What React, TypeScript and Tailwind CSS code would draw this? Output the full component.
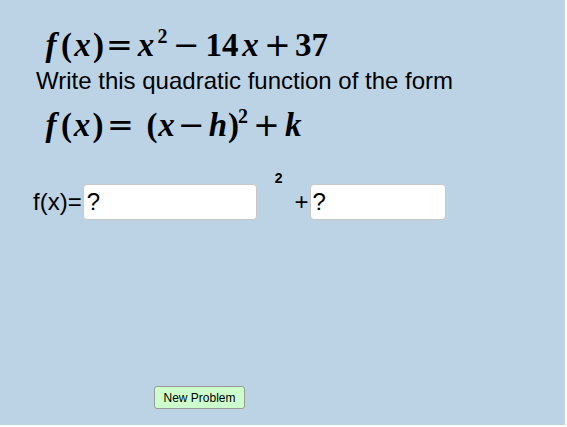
import React from 'react';

const serif = { fontFamily: '"Liberation Serif", "DejaVu Serif", serif' };
const sans = { fontFamily: '"Liberation Sans", Arial, sans-serif' };
const opFont = { fontFamily: '"DejaVu Sans", sans-serif' };

function MathLine({ children }: { children: React.ReactNode }) {
  return (
    <div className="flex items-baseline h-[34px] leading-[34px] text-[33px] font-bold text-black" style={serif}>
      {children}
    </div>
  );
}

// one glyph of the formula, centred in a box of its own width
function T({ w, it, children }: { w: string; it?: boolean; children: React.ReactNode }) {
  return <span className={`${w} text-center ${it ? 'italic' : ''}`}>{children}</span>;
}

function Op({ w, c }: { w: string; c: string }) {
  return (
    <span className={`${w} text-center text-[32px] font-normal`} style={opFont}>
      {c}
    </span>
  );
}

const Sq = ({ w }: { w: string }) => (
  <span className={`${w} text-center text-[20px] relative -top-[13px]`}>2</span>
);

export default function App() {
  return (
    <div className="w-[567px] h-[427px] bg-white">
      <div className="w-[565px] h-[425px] bg-[#bcd3e6] flex flex-col pt-[28px]">
        <div className="pl-[41px]">
          <MathLine>
            <T w="w-[20px]" it>f</T>
            <T w="w-[11px]">(</T>
            <T w="w-[21px]" it>x</T>
            <T w="w-[11px]">)</T>
            <Op w="w-[31px]" c="=" />
            <T w="w-[22px]" it>x</T>
            <Sq w="w-[11px]" />
            <Op w="w-[37px]" c="−" />
            <T w="w-[34px]">14</T>
            <T w="w-[23px]" it>x</T>
            <Op w="w-[31px]" c="+" />
            <T w="w-[37px]">37</T>
          </MathLine>
        </div>
        <div className="pl-[36px] mt-[4px] text-[24px] leading-[30px] text-black" style={sans}>
          Write this quadratic function of the form
        </div>
        <div className="pl-[41px] mt-[12px]">
          <MathLine>
            <T w="w-[20px]" it>f</T>
            <T w="w-[11px]">(</T>
            <T w="w-[20px]" it>x</T>
            <T w="w-[12px]">)</T>
            <Op w="w-[33px]" c="=" />
            <T w="w-[12px] ml-[9px]">(</T>
            <T w="w-[17px]" it>x</T>
            <Op w="w-[33px]" c="−" />
            <T w="w-[20px]" it>h</T>
            <T w="w-[10px]">)</T>
            <Sq w="w-[10px]" />
            <Op w="w-[37px]" c="+" />
            <T w="w-[16px]" it>k</T>
          </MathLine>
        </div>
        <div className="flex items-center mt-[42px] pl-[33px] text-[24px] text-black" style={sans}>
          <span>f(x)=</span>
          <div className="ml-[1px] w-[174px] h-[36px] bg-white border border-[#c8c8c8] rounded-[4px] flex items-center pl-[3px]">
            ?
          </div>
          <span className="ml-[18px] -mt-[48px] text-[14px] font-bold">2</span>
          <span className="ml-[12px]">+</span>
          <div className="ml-[2px] w-[136px] h-[36px] bg-white border border-[#c8c8c8] rounded-[4px] flex items-center pl-[1px]">
            ?
          </div>
        </div>
        <div className="flex-1" />
        <div className="pl-[154px] pb-[16px]">
          <button
            className="w-[91px] h-[23px] bg-[#ccffcc] border border-[#9a9a9a] rounded-[3px] text-[12px] text-black"
            style={sans}
          >
            New Problem
          </button>
        </div>
      </div>
    </div>
  );
}
